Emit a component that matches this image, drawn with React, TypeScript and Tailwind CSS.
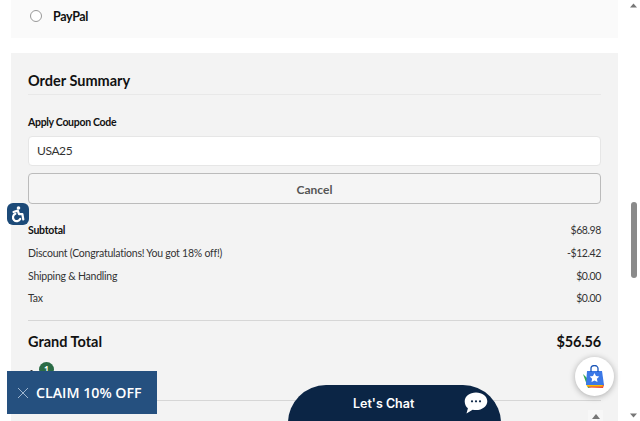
import React from 'react'

const rows = [
    { label: 'Discount (Congratulations! You got 18% off!)', value: '-$12.42' },
    { label: 'Shipping & Handling', value: '$0.00' },
    { label: 'Tax', value: '$0.00' },
]

const App = () => {
    return (
        <div className="relative h-[421px] w-[640px] overflow-hidden bg-white font-['Lato',sans-serif] text-[#111]">
            <div className="flex h-full">
                <div className="w-[625px] pl-[11px] pr-[7px]">
                    {/* Payment option */}
                    <div className="flex h-[38px] items-start bg-[#fafafa] pl-[19px] pt-[10px]">
                        <span className="h-3 w-3 rounded-full border border-[#999] bg-white" />
                        <span className="ml-[11px] text-[12.5px] leading-[13px] font-bold tracking-[-0.35px]">PayPal</span>
                    </div>

                    {/* Order summary */}
                    <div className="mt-[15px] h-[400px] bg-[#f3f3f3] px-[17px] pt-[18px]">
                        <h2 className="border-b border-[#e8e8e8] pb-[4px] text-[14.5px] leading-[19px] font-bold">Order Summary</h2>
                        <label className="mt-[20px] block text-[10.5px] leading-[14px] font-bold tracking-[-0.3px]">Apply Coupon Code</label>
                        <div className="mt-[7px] flex h-[30px] items-center rounded border border-[#e6e6e6] bg-white pl-[8px] text-[12px] tracking-[-0.4px] text-[#333]">USA25</div>
                        <button className="mt-[7px] block h-[31px] w-full rounded border border-[#bbb] bg-[#f5f5f5] pt-[3px] text-[12px] font-bold text-[#555]">Cancel</button>

                        <div className="mt-[19px] flex h-[16px] items-center justify-between text-[10.5px] tracking-[-0.25px]">
                            <span className="font-bold">Subtotal</span>
                            <span className="tracking-[-0.4px] text-[#333]">$68.98</span>
                        </div>
                        <div className="mt-[7px] flex flex-col gap-[6.5px]">
                            {rows.map((row) => (
                                <div key={row.label} className="flex h-[16px] items-center justify-between text-[10.5px] tracking-[-0.23px] text-[#333]">
                                    <span>{row.label}</span>
                                    <span className="tracking-[-0.4px]">{row.value}</span>
                                </div>
                            ))}
                        </div>

                        <div className="mt-[13px] border-t border-[#d6d6d6] pt-[11px]">
                            <div className="flex h-[20px] items-center justify-between text-[14.5px] font-bold">
                                <span>Grand Total</span>
                                <span className="tracking-[-0.15px]">$56.56</span>
                            </div>
                        </div>
                        <div className="mt-[48px] border-t border-[#d6d6d6]" />
                    </div>
                </div>

                {/* Page scrollbar */}
                <div className="relative w-[15px] bg-white">
                    <svg className="absolute left-[5px] top-[3px]" width="7" height="5" viewBox="0 0 7 5"><path d="M3.5 0.5 7 4.5H0z" fill="#777" /></svg>
                    <div className="absolute left-[6px] top-[202px] h-[76px] w-[6px] rounded-full bg-[#8a8a8a]" />
                    <svg className="absolute left-[5px] top-[413px]" width="7" height="5" viewBox="0 0 7 5"><path d="M3.5 4.5 7 0.5H0z" fill="#777" /></svg>
                </div>
            </div>

            {/* Cart count badge */}
            <span className="absolute left-[39px] top-[362px] flex h-[15px] w-[15px] items-center justify-center rounded-full bg-[#2a6b45] text-[9px] font-bold text-white">1</span>
            <span className="absolute left-[30px] top-[370px] h-[3px] w-[3px] rounded-full bg-[#222]" />

            {/* Accordion caret */}
            <div className="absolute left-[588px] top-[410px] flex h-[11px] w-[15px] items-start justify-center bg-[#f7f7f7] pt-[4px]">
                <svg width="8" height="5" viewBox="0 0 8 5"><path d="M4 0 8 5H0z" fill="#777" /></svg>
            </div>

            {/* Accessibility button */}
            <div className="absolute left-[7px] top-[203px] flex h-[22px] w-[22px] items-center justify-center rounded-[6px] bg-[#1c4a78]">
                <svg width="16" height="17" viewBox="0 0 16 17" fill="none">
                    <circle cx="8.500" cy="2" r="1.800" fill="#fff" />
                    <path d="M3.500 6 7.800 4.600l1.200 3.600h3.400l.9 5.300" stroke="#fff" strokeWidth="2.200" strokeLinecap="round" strokeLinejoin="round" />
                    <path d="M5.400 7.800a3.800 3.800 0 1 0 4.800 5.200" stroke="#fff" strokeWidth="2.200" strokeLinecap="round" />
                </svg>
            </div>

            {/* Claim banner */}
            <div className="absolute left-[7px] top-[371px] flex h-[43px] w-[150px] items-center bg-[#25507f] pl-[10px] font-['Open_Sans',sans-serif] text-[14.2px] font-semibold text-white">
                <svg width="12" height="12" viewBox="0 0 12 12" fill="none"><path d="M1 1l10 10M11 1 1 11" stroke="#9fb6cf" strokeWidth="1" /></svg>
                <span className="ml-[7px] whitespace-nowrap">CLAIM 10% OFF</span>
            </div>

            {/* Chat widget */}
            <div className="absolute left-[288px] top-[385px] h-[60px] w-[213px] rounded-t-[38px] bg-[#0b2545] font-['Inter',sans-serif] text-white">
                <span className="absolute left-[65px] top-[11px] text-[12.5px] leading-[16px] font-semibold">Let's Chat</span>
                <svg className="absolute left-[176px] top-[7px]" width="24" height="22" viewBox="0 0 24 22">
                    <path d="M12 .5c6.300 0 11.300 3.800 11.300 8.800s-5 8.800-11.300 8.800c-1.200 0-2.300-.1-3.400-.4L2.500 21.500l1.400-5.200C1.800 14.700.7 12.200.7 9.300.7 4.300 5.700.5 12 .5z" fill="#fff" />
                    <circle cx="8" cy="9.300" r="1.100" fill="#0b2545" />
                    <circle cx="12" cy="9.300" r="1.100" fill="#0b2545" />
                    <circle cx="16" cy="9.300" r="1.100" fill="#0b2545" />
                </svg>
            </div>

            {/* Shopping badge */}
            <div className="absolute left-[575px] top-[357px] flex h-[39px] w-[39px] items-center justify-center rounded-full bg-white shadow-[0_1px_6px_rgba(0,0,0,0.3)]">
                <svg className="-ml-[1px]" width="22" height="24" viewBox="0 0 22 24">
                    <path d="M0 9 5 23l7-2z" fill="#34a853" />
                    <path d="M4 20 6 22.500 20 23l1-3z" fill="#ea4335" />
                    <path d="M3 19h16l1 2.500H4z" fill="#fbbc04" />
                    <path d="M4 6h15l2 14H3z" fill="#3b78e7" />
                    <path d="M8 7V3.500a3.500 3 0 0 1 7 0V7" fill="none" stroke="#1a56b8" strokeWidth="1.300" />
                    <path d="M11.500 8l1.500 3 3.300.4-2.400 2.300.6 3.300-3-1.600-3 1.600.6-3.300-2.400-2.300 3.300-.4z" fill="#fff" />
                </svg>
            </div>
        </div>
    )
}

export default App
